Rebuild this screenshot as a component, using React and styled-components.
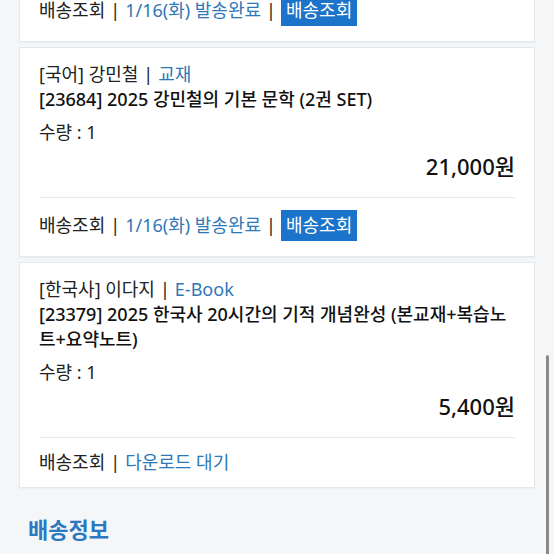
import React from "react";
import styled, { createGlobalStyle } from "styled-components";

const Global = createGlobalStyle`
  html, body { margin: 0; padding: 0; }
  body {
    background: #f5f6f8;
    font-family: "Noto Sans", "Noto Sans CJK KR", sans-serif;
    color: #141414;
  }
`;

const Viewport = styled.div`
  width: 554px;
  height: 554px;
  overflow: hidden;
  position: relative;
  background: #f5f6f8;
`;

const List = styled.div`
  display: flex;
  flex-direction: column;
  gap: 5px;
  padding: 0 19px;
  margin-top: ${(p) => p.$offset}px;
  width: 516px;
`;

const Card = styled.section`
  background: #fff;
  border: 1px solid #e7e8eb;
  box-shadow: 0 1px 1px rgba(0, 0, 0, 0.03);
`;

const Body = styled.div`
  padding: 14px 19px 0 19px;
`;

const Meta = styled.div`
  font-size: 18px;
  line-height: 25px;
  color: #222;
`;

const Link = styled.span`
  color: #2e78b7;
`;

const Sep = styled.span`
  color: #222;
  margin: 0 5px;
`;

const Title = styled.div`
  font-size: 18px;
  line-height: 25px;
  font-weight: 500;
  color: #111;
`;

const Qty = styled.div`
  margin-top: 7px;
  font-size: 18px;
  line-height: 26px;
  color: #222;
`;

const Price = styled.div`
  margin-top: 6px;
  text-align: right;
  font-size: 22px;
  line-height: 30px;
  font-weight: 500;
  color: #111;
`;

const Divider = styled.hr`
  border: 0;
  border-top: 1.5px solid #e8e9ec;
  margin: 16px 19px 0 19px;
`;

const Delivery = styled.div`
  display: flex;
  align-items: center;
  padding: ${(p) => (p.$tall ? "12px 19px 15px" : "12px 19px 12px")};
  font-size: 18px;
  line-height: 25px;
  color: #222;
`;

const TrackButton = styled.button`
  all: unset;
  height: 31px;
  padding: 0 5px;
  display: inline-flex;
  align-items: center;
  background: #1b74c9;
  color: #fff;
  font-size: 18px;
  font-family: inherit;
`;

const Heading = styled.h2`
  margin: 0;
  padding: 27px 28px 0;
  font-size: 22px;
  line-height: 28px;
  font-weight: 700;
  color: #2b79c0;
`;

const Scrollbar = styled.div`
  position: absolute;
  right: 5px;
  top: 355px;
  width: 3px;
  height: 210px;
  border-radius: 2px;
  background: #8a8a8a;
`;

function DeliveryRow({ status, button }) {
  return (
    <Delivery $tall={!!button}>
      배송조회<Sep>|</Sep>
      <Link>{status}</Link>
      {button && (
        <>
          <Sep>|</Sep>
          <TrackButton>배송조회</TrackButton>
        </>
      )}
    </Delivery>
  );
}

function Item({ subject, author, type, title, qty, price, status, button }) {
  return (
    <Card>
      <Body>
        <Meta>
          [{subject}] {author}
          <Sep>|</Sep>
          <Link>{type}</Link>
        </Meta>
        <Title>{title}</Title>
        <Qty>수량 : {qty}</Qty>
        <Price>{price}</Price>
      </Body>
      <Divider />
      <DeliveryRow status={status} button={button} />
    </Card>
  );
}

export default function App() {
  return (
    <Viewport>
      <Global />
      <List $offset={-18}>
        <Card>
          <DeliveryRow status="1/16(화) 발송완료" button />
        </Card>
        <Item
          subject="국어"
          author="강민철"
          type="교재"
          title="[23684] 2025 강민철의 기본 문학 (2권 SET)"
          qty={1}
          price="21,000원"
          status="1/16(화) 발송완료"
          button
        />
        <Item
          subject="한국사"
          author="이다지"
          type="E-Book"
          title="[23379] 2025 한국사 20시간의 기적 개념완성 (본교재+복습노트+요약노트)"
          qty={1}
          price="5,400원"
          status="다운로드 대기"
        />
      </List>
      <Heading>배송정보</Heading>
      <Scrollbar />
    </Viewport>
  );
}
